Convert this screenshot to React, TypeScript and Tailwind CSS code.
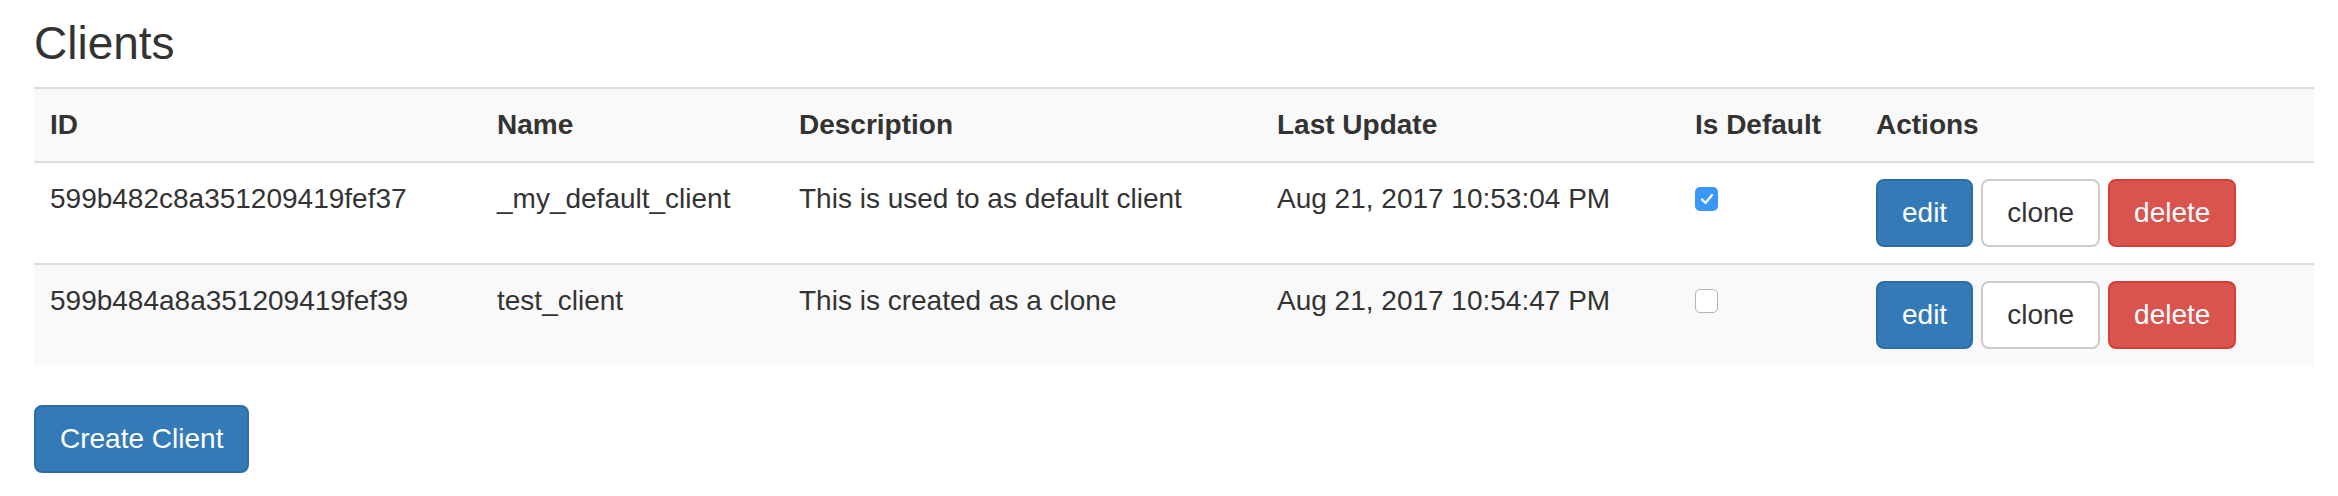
import React from "react";

interface Client {
  id: string;
  name: string;
  description: string;
  lastUpdate: string;
  isDefault: boolean;
}

const clients: Client[] = [
  {
    id: "599b482c8a351209419fef37",
    name: "_my_default_client",
    description: "This is used to as default client",
    lastUpdate: "Aug 21, 2017 10:53:04 PM",
    isDefault: true,
  },
  {
    id: "599b484a8a351209419fef39",
    name: "test_client",
    description: "This is created as a clone",
    lastUpdate: "Aug 21, 2017 10:54:47 PM",
    isDefault: false,
  },
];

function Checkbox({ checked }: { checked: boolean }) {
  if (checked) {
    return (
      <span className="mt-[8px] flex h-[24px] w-[23px] items-center justify-center rounded-[5px] bg-[#3b97f7]">
        <svg width="14" height="12" viewBox="0 0 14 12" fill="none">
          <path
            d="M2 6.5 L5.5 10 L12 2"
            stroke="white"
            strokeWidth="2.2"
            strokeLinecap="round"
            strokeLinejoin="round"
          />
        </svg>
      </span>
    );
  }
  return (
    <span className="mt-[8px] block h-[24px] w-[23px] rounded-[5px] border-[1.5px] border-[#b5b5b5] bg-white" />
  );
}

export default function App() {
  return (
    <div className="min-h-screen bg-white pl-[34px] pt-[19px] font-['Liberation_Sans',Arial,sans-serif] text-[#333]">
      <h3 className="mb-[19px] text-[46px] leading-[49px] font-normal">
        Clients
      </h3>

      <table className="w-[2280px] table-fixed border-collapse text-[28px] leading-[40px]">
        <colgroup>
          <col className="w-[447px]" />
          <col className="w-[302px]" />
          <col className="w-[478px]" />
          <col className="w-[418px]" />
          <col className="w-[181px]" />
          <col className="w-[454px]" />
        </colgroup>
        <thead>
          <tr className="border-y-2 border-[#ddd] bg-[#f9f9f9]">
            <th className="p-4 text-left font-bold">ID</th>
            <th className="p-4 text-left font-bold">Name</th>
            <th className="p-4 text-left font-bold">Description</th>
            <th className="p-4 text-left font-bold">Last Update</th>
            <th className="p-4 text-left font-bold">Is Default</th>
            <th className="p-4 text-left font-bold">Actions</th>
          </tr>
        </thead>
        <tbody>
          {clients.map((client, i) => (
            <tr
              key={client.id}
              className={`border-[#ddd] ${
                i % 2 === 1 ? "border-t-2 bg-[#f9f9f9]" : "bg-white"
              }`}
            >
              <td className="p-4 align-top">{client.id}</td>
              <td className="p-4 align-top">{client.name}</td>
              <td className="p-4 align-top">{client.description}</td>
              <td className="p-4 align-top">{client.lastUpdate}</td>
              <td className="p-4 align-top">
                <Checkbox checked={client.isDefault} />
              </td>
              <td className="p-4 align-top">
                <div className="flex gap-2">
                  <button className="rounded-[8px] border-2 border-[#2e6da4] bg-[#337ab7] px-6 py-3 text-white">
                    edit
                  </button>
                  <button className="rounded-[8px] border-2 border-[#ccc] bg-white px-6 py-3 text-[#333]">
                    clone
                  </button>
                  <button className="rounded-[8px] border-2 border-[#d43f3a] bg-[#d9534f] px-6 py-3 text-white">
                    delete
                  </button>
                </div>
              </td>
            </tr>
          ))}
        </tbody>
      </table>

      <button className="mt-[40px] rounded-[8px] border-2 border-[#2e6da4] bg-[#337ab7] px-6 py-3 text-[28px] leading-[40px] text-white">
        Create Client
      </button>
    </div>
  );
}
